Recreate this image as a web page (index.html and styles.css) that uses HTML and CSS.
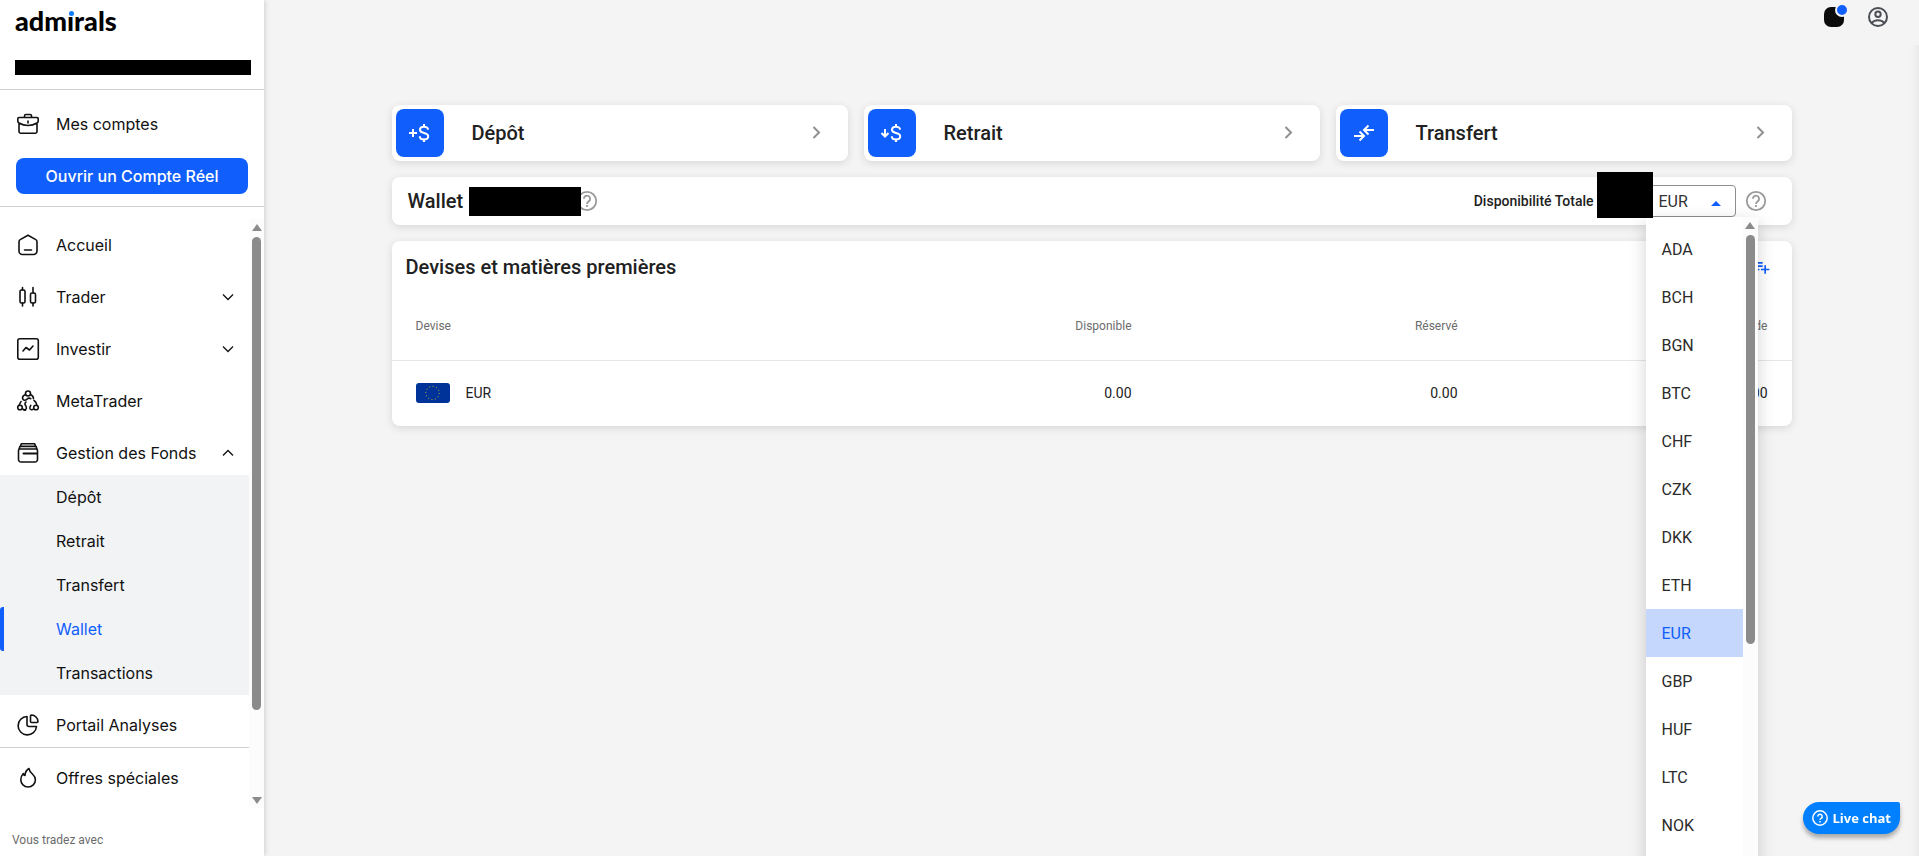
FILE: index.html
```html
<!DOCTYPE html>
<html lang="fr">
<head>
  <meta charset="UTF-8" />
  <meta name="viewport" content="width=device-width, initial-scale=1.0" />
  <title>Wallet</title>
  <link rel="stylesheet" href="styles.css">
</head>
<body>
  <!-- Sidebar -->
  <aside class="sidebar">
    <a class="logo" href="#">adm<span class="logo-i">ı</span>rals</a>
    <div class="user-redacted"></div>

    <div class="accounts">
      <a class="nav-link" href="#">
        <svg class="icon" viewBox="0 0 24 24"><path d="M3 5.500h18a1.200 1.200 0 0 1 1.200 1.200V9c0 1-.5 1.700-1.200 2v8.500a1.800 1.800 0 0 1-1.800 1.800H4.800A1.800 1.800 0 0 1 3 19.500V11c-.7-.3-1.200-1-1.200-2V6.700A1.200 1.200 0 0 1 3 5.500zM3 11c2.500 1.500 5.500 2.500 9 2.500s6.500-1 9-2.500M8.500 5.500V4A1.500 1.500 0 0 1 10 2.500h4A1.500 1.500 0 0 1 15.500 4v1.500M12 9v2" /></svg>
        Mes comptes
      </a>
      <button class="open-btn" type="button">Ouvrir un Compte Réel</button>
    </div>

    <div class="nav-wrap">
      <nav class="nav">
        <a class="nav-link" href="#">
          <svg class="icon" viewBox="0 0 24 24"><path d="M12 2.300 4.200 6.600A2.500 2.500 0 0 0 3 8.700V18a3.500 3.500 0 0 0 3.500 3.500h11A3.500 3.500 0 0 0 21 18V8.700a2.500 2.500 0 0 0-1.200-2.100zM8.500 17h7" /></svg>
          Accueil
        </a>
        <a class="nav-link" href="#">
          <svg class="icon" viewBox="0 0 24 24"><rect x="4" y="5" width="5" height="13" rx="1.500" /><rect x="14.500" y="8" width="5" height="10" rx="1.500" /><path d="M6.500 2.500v2.500M6.500 18v3M17 2.500v5.500M17 18v3" /></svg>
          Trader
          <svg class="chevron" viewBox="0 0 16 16"><path d="M3 5.500l5 5 5-5" /></svg>
        </a>
        <a class="nav-link" href="#">
          <svg class="icon" viewBox="0 0 24 24"><rect x="1.800" y="1.800" width="20.500" height="20.500" rx="2" /><path d="M7 14l3-3.500 3.500 2.500L17 9" /></svg>
          Investir
          <svg class="chevron" viewBox="0 0 16 16"><path d="M3 5.500l5 5 5-5" /></svg>
        </a>
        <a class="nav-link" href="#">
          <svg class="icon" viewBox="0 0 24 24"><circle cx="12" cy="4.500" r="2.500" /><circle cx="4" cy="18.500" r="2.300" /><circle cx="20" cy="18.500" r="2.300" /><path d="M9.500 5.500C7.500 6.300 6.300 8 6.600 9.500c.4 2 2.700 2.200 4.200.8 1.200-1.200 2.500-1.500 4-.6M14.500 5.500c1.800.8 3 2.500 3 4.300M5 12.500 3.200 16M18 11.500c1.500.8 2.500 2.500 2.800 4.500M6.500 19.700c.8 1.500 3 1.500 3.800 0 .7-1.500-.3-2.500-1-3.700-.6-1-.3-2.500.7-3M17.500 20c-1 1-2.800 1-3.600-.4-.5-1.200.2-2.200.9-3.200M8 21.300h1.500" /></svg>
          MetaTrader
        </a>
        <a class="nav-link" href="#">
          <svg class="icon" viewBox="0 0 24 24"><path d="M2.500 9.500A1.500 1.500 0 0 1 4 8h16a1.500 1.500 0 0 1 1.500 1.500v9a2.500 2.500 0 0 1-2.500 2.500H5a2.500 2.500 0 0 1-2.500-2.500zM3 8l1-2.600h16L21 8M4.500 5l.8-2.200h13.400l.8 2.200" /><path class="bold" d="M7.500 12.500H21" /></svg>
          Gestion des Fonds
          <svg class="chevron" viewBox="0 0 16 16"><path d="M3 10.500l5-5 5 5" /></svg>
        </a>
        <ul class="submenu">
          <li><a href="#">Dépôt</a></li>
          <li><a href="#">Retrait</a></li>
          <li><a href="#">Transfert</a></li>
          <li><a class="active" href="#">Wallet</a></li>
          <li><a href="#">Transactions</a></li>
        </ul>
        <a class="nav-link" href="#">
          <svg class="icon" viewBox="0 0 24 24"><path d="M11 3.500A9.200 9.200 0 1 0 20.500 13.500H13a2 2 0 0 1-2-2z" /><path d="M14.500 3a1 1 0 0 1 1-1A6.800 6.800 0 0 1 22 8.500a1 1 0 0 1-1 1h-5.500a1 1 0 0 1-1-1z" /></svg>
          Portail Analyses
        </a>
        <hr class="nav-line">
        <a class="nav-link" href="#">
          <svg class="icon" viewBox="0 0 24 24"><path d="M13 2.500c-3 2-4 4.500-4 7-1-.3-1.500-1-1.700-2C5.500 9.500 4.800 11.500 4.800 13.700a7.300 7.300 0 0 0 14.600 0c0-2.700-1.400-4.200-3-5.700C14.500 6.300 13.300 5 13 2.500z" /></svg>
          Offres spéciales
        </a>
      </nav>
      <div class="scrollbar nav-scrollbar">
        <span class="arrow-up"></span>
        <span class="thumb"></span>
        <span class="arrow-down"></span>
      </div>
    </div>

    <p class="trade-with">Vous tradez avec</p>
  </aside>

  <div class="page">
    <!-- Top bar -->
    <header class="topbar">
      <button class="notif" type="button" aria-label="Notifications"><span class="dot"></span></button>
      <button class="account" type="button" aria-label="Profil">
        <svg viewBox="0 0 24 24"><circle cx="12" cy="12" r="9" /><circle cx="12" cy="9.300" r="2.700" /><path d="M5.500 18c1.700-1.800 3.900-2.800 6.500-2.800s4.800 1 6.500 2.800" /></svg>
      </button>
    </header>

    <main class="content">
      <div class="container">
        <!-- Actions -->
        <div class="actions">
          <a class="card action" href="#">
            <span class="action-icon">
              <svg viewBox="0 0 24 24"><path d="M1 12h8M5 8v8M20 8.700c0-1.900-1.600-3-4-3s-4 1.100-4 3c0 2 1.500 2.700 4 3.300s4.200 1.300 4.200 3.300-1.700 3.200-4.200 3.200-4.200-1.200-4.200-3.200M16 3v2.500M16 18.500V21" /></svg>
            </span>
            <span class="action-title">Dépôt</span>
            <svg class="next" viewBox="0 0 24 24"><path d="M9.500 6l5.500 5.500L9.500 17" /></svg>
          </a>
          <a class="card action" href="#">
            <span class="action-icon">
              <svg viewBox="0 0 24 24"><path d="M5 8v7M1.500 12 5 15.500 8.500 12M20 8.700c0-1.900-1.600-3-4-3s-4 1.100-4 3c0 2 1.500 2.700 4 3.300s4.200 1.300 4.200 3.300-1.700 3.200-4.200 3.200-4.200-1.200-4.200-3.200M16 3v2.500M16 18.500V21" /></svg>
            </span>
            <span class="action-title">Retrait</span>
            <svg class="next" viewBox="0 0 24 24"><path d="M9.500 6l5.500 5.500L9.500 17" /></svg>
          </a>
          <a class="card action" href="#">
            <span class="action-icon">
              <svg viewBox="0 0 24 24"><path d="M2 15h9M7.500 10.500 12 15l-4.500 4.500M22 9h-9M16.500 4.500 12 9l4.500 4.500" /></svg>
            </span>
            <span class="action-title">Transfert</span>
            <svg class="next" viewBox="0 0 24 24"><path d="M9.500 6l5.500 5.500L9.500 17" /></svg>
          </a>
        </div>

        <!-- Wallet -->
        <section class="card wallet">
          <h1>Wallet</h1>
          <span class="wallet-redacted"></span>
          <svg class="help wallet-help" viewBox="0 0 24 24"><circle cx="12" cy="12" r="9.200" /><path d="M8.900 9.800a3.100 3.100 0 1 1 4.900 2.500c-1 .8-1.800 1.300-1.800 2.700M12 16v2" /></svg>
          <label class="total" for="currency">Disponibilité Totale</label>
          <span class="total-redacted"></span>
          <div class="select">
            <select id="currency">
              <option>EUR</option>
            </select>
            <svg class="caret" viewBox="0 0 24 24"><path d="M7 14l5-5 5 5z" /></svg>
            <div class="menu">
              <ul class="options">
                <li><button type="button">ADA</button></li>
                <li><button type="button">BCH</button></li>
                <li><button type="button">BGN</button></li>
                <li><button type="button">BTC</button></li>
                <li><button type="button">CHF</button></li>
                <li><button type="button">CZK</button></li>
                <li><button type="button">DKK</button></li>
                <li><button type="button">ETH</button></li>
                <li><button type="button" class="selected">EUR</button></li>
                <li><button type="button">GBP</button></li>
                <li><button type="button">HUF</button></li>
                <li><button type="button">LTC</button></li>
                <li><button type="button">NOK</button></li>
              </ul>
              <div class="scrollbar menu-scrollbar">
                <span class="arrow-up"></span>
                <span class="thumb"></span>
              </div>
            </div>
          </div>
          <svg class="help" viewBox="0 0 24 24"><circle cx="12" cy="12" r="9.200" /><path d="M8.900 9.800a3.100 3.100 0 1 1 4.900 2.500c-1 .8-1.800 1.300-1.800 2.700M12 16v2" /></svg>
        </section>

        <!-- Currencies -->
        <section class="card currencies">
          <div class="currencies-head">
            <h2>Devises et matières premières</h2>
            <button class="add" type="button" aria-label="Ajouter">
              <svg viewBox="0 0 24 24"><path d="M14 10H2v2h12v-2zm0-4H2v2h12V6zm4 8v-4h-2v4h-4v2h4v4h2v-4h4v-2h-4zM2 16h8v-2H2v2z" /></svg>
            </button>
          </div>
          <table>
            <thead>
              <tr><th>Devise</th><th>Disponible</th><th>Réservé</th><th>Solde</th></tr>
            </thead>
            <tbody>
              <tr>
                <td>
                  <div class="currency">
                    <svg class="flag" viewBox="0 0 34 20"><rect width="34" height="20" rx="3" /><circle cx="16.500" cy="10" r="6.700" /></svg>
                    EUR
                  </div>
                </td>
                <td>0.00</td>
                <td>0.00</td>
                <td>0.00</td>
              </tr>
            </tbody>
          </table>
        </section>
      </div>
    </main>
  </div>

  <button class="chat" type="button">
    <svg viewBox="0 0 16 16"><circle cx="8" cy="8" r="7.200" /><path d="M5.800 6.400a2.200 2.200 0 1 1 3.300 1.900C8.300 8.700 8 9 8 9.800M8 11v1.500" /></svg>
    Live chat
  </button>
</body>
</html>
```

FILE: styles.css
```css
* {
  box-sizing: border-box;
}

body {
  margin: 0;
  height: 100vh;
  display: flex;
  overflow: hidden;
  background-color: #f4f4f4;
  font-family: Roboto, Arial, sans-serif;
  color: #212121;
}

a {
  color: inherit;
  text-decoration: none;
}

button {
  border: none;
  padding: 0;
  background: none;
  font-family: inherit;
  color: inherit;
  cursor: pointer;
}

ul {
  list-style: none;
  margin: 0;
  padding: 0;
}

svg {
  flex: none;
  fill: none;
  stroke: currentColor;
}

/* Sidebar */
.sidebar {
  width: 264px;
  flex: none;
  display: flex;
  flex-direction: column;
  background-color: #fff;
  box-shadow: 0 0 6px rgba(0, 0, 0, 0.2);
  font-family: Inter, Arial, sans-serif;
  font-size: 16px;
  color: #111;
  z-index: 1;
}

.logo {
  padding: 6px 15px 0;
  font-family: Lato, sans-serif;
  font-weight: 900;
  font-size: 27px;
  line-height: 30px;
  color: #000;
}

.logo-i {
  position: relative;
}

.logo-i::after {
  content: "";
  position: absolute;
  left: 2px;
  top: 7px;
  width: 5px;
  height: 5px;
  border-radius: 50%;
  background-color: #0a7cff;
}

.user-redacted {
  height: 15px;
  margin: 24px 13px 14px 15px;
  background-color: #000;
}

.accounts {
  padding: 12px 0;
  border-top: 1px solid #cfcfd6;
  border-bottom: 1px solid #cfcfd6;
}

.open-btn {
  display: block;
  width: 232px;
  height: 36px;
  margin: 12px 16px 0;
  border-radius: 8px;
  background-color: #105efb;
  color: #fff;
  font-weight: 500;
  font-size: 16px;
}

.nav-link {
  display: flex;
  align-items: center;
  height: 44px;
  padding: 0 12px 0 16px;
}

.icon {
  width: 24px;
  height: 24px;
  margin-right: 16px;
  stroke-width: 1.6;
  stroke-linecap: round;
  stroke-linejoin: round;
}

.icon .bold {
  stroke-width: 2;
}

.chevron {
  width: 16px;
  height: 16px;
  margin-left: auto;
  margin-right: 1px;
  stroke-width: 1.3;
}

.nav-wrap {
  height: 601px;
  display: flex;
}

.nav {
  flex: 1;
  display: flex;
  flex-direction: column;
  gap: 8px;
  padding-top: 16px;
}

.submenu {
  margin-top: -8px;
  background-color: #f1f3f5;
}

.submenu a {
  display: block;
  height: 44px;
  line-height: 44px;
  padding-left: 56px;
}

.submenu .active {
  color: #105efb;
  padding-left: 52px;
  border-left: 4px solid #105efb;
  border-radius: 3px;
}

.nav-line {
  width: 100%;
  height: 1px;
  margin: -8px 0 0;
  border: none;
  background-color: #cfcfd6;
}

.trade-with {
  margin: 24px 12px 0;
  font-family: Roboto, sans-serif;
  font-size: 12px;
  line-height: 16px;
  color: #6c6c6c;
}

/* Scrollbars */
.scrollbar {
  width: 15px;
  flex: none;
  display: flex;
  flex-direction: column;
  align-items: center;
  background-color: #fcfcfc;
}

.nav-scrollbar {
  margin-top: 12px;
}

.arrow-up,
.arrow-down {
  border-left: 5px solid transparent;
  border-right: 5px solid transparent;
}

.arrow-up {
  margin: 5px 0 6px;
  border-bottom: 7px solid #8b8b8b;
}

.arrow-down {
  margin: auto 0 4px;
  border-top: 7px solid #8b8b8b;
}

.thumb {
  width: 9px;
  height: 473px;
  border-radius: 5px;
  background-color: #8b8b8b;
}

/* Page */
.page {
  flex: 1;
  display: flex;
  flex-direction: column;
}

.topbar {
  height: 45px;
  display: flex;
  justify-content: flex-end;
  align-items: flex-start;
  gap: 22px;
  padding: 5px 29px 0 0;
}

.notif {
  position: relative;
  width: 20px;
  height: 20px;
  margin-top: 2px;
  border-radius: 7px;
  background-color: #0b0b0b;
}

.dot {
  position: absolute;
  top: -4px;
  right: -5px;
  width: 14px;
  height: 14px;
  border: 2px solid #f4f4f4;
  border-radius: 50%;
  background-color: #105efb;
}

.account svg {
  display: block;
  width: 24px;
  height: 24px;
  stroke: #4b4f55;
  stroke-width: 2;
}

.content {
  flex: 1;
  padding: 60px 64px 0;
  box-shadow: inset -12px 0 10px -10px rgba(0, 0, 0, 0.06);
}

.container {
  max-width: 1400px;
  margin: 0 auto;
  display: flex;
  flex-direction: column;
  gap: 16px;
}

.card {
  border-radius: 8px;
  background-color: #fff;
  box-shadow: 0 2px 8px rgba(0, 0, 0, 0.12);
}

.actions {
  display: grid;
  grid-template-columns: repeat(3, 1fr);
  gap: 16px;
}

.action {
  display: flex;
  align-items: center;
  padding: 4px 20px 4px 4px;
}

.action-icon {
  width: 48px;
  height: 48px;
  display: flex;
  align-items: center;
  justify-content: center;
  border-radius: 8px;
  background-color: #105efb;
  color: #fff;
}

.action-icon svg {
  width: 24px;
  height: 24px;
  stroke-width: 2;
}

.action-title {
  flex: 1;
  margin-left: 28px;
  font-size: 20px;
  font-weight: 500;
}

.next {
  width: 24px;
  height: 24px;
  stroke: #8f8f8f;
  stroke-width: 2;
}

.wallet {
  height: 48px;
  display: flex;
  align-items: center;
  padding: 0 24px 0 16px;
}

h1,
h2 {
  margin: 0;
  font-size: 20px;
  font-weight: 500;
}

.wallet-redacted {
  width: 112px;
  height: 29px;
  margin-left: 6px;
  background-color: #000;
  z-index: 1;
}

.help {
  width: 24px;
  height: 24px;
  stroke: #9a9a9a;
  stroke-width: 1.8;
}

.wallet-help {
  margin-left: -6px;
}

.total {
  margin-left: auto;
  font-size: 14px;
  font-weight: 500;
}

.total-redacted {
  width: 56px;
  height: 46px;
  margin: -5px -7px 7px 3px;
  background-color: #000;
  z-index: 3;
}

.select {
  position: relative;
  margin-right: 8px;
  z-index: 2;
}

.select select {
  display: block;
  width: 90px;
  height: 32px;
  padding: 0 12px;
  appearance: none;
  border: 1px solid #8f8f8f;
  border-radius: 4px;
  background-color: #fff;
  font-family: inherit;
  font-size: 16px;
  color: #333;
}

.caret {
  position: absolute;
  top: 7px;
  right: 8px;
  width: 24px;
  height: 24px;
  fill: #105efb;
  stroke: none;
  pointer-events: none;
}

.menu {
  position: absolute;
  top: 100%;
  left: 0;
  width: 112px;
  display: flex;
  background-color: #fff;
  box-shadow: 0 5px 16px rgba(0, 0, 0, 0.18);
}

.options {
  flex: 1;
  padding: 8px 0 16px;
}

.options button {
  display: block;
  width: 100%;
  height: 48px;
  padding-left: 16px;
  text-align: left;
  font-size: 16px;
  color: #2b2b2b;
}

.options .selected {
  background-color: #c5d7fc;
  color: #105efb;
}

.menu-scrollbar .thumb {
  height: 409px;
}

.currencies-head {
  display: flex;
  align-items: center;
  justify-content: space-between;
  height: 52px;
  padding: 0 21px 0 14px;
}

.add svg {
  display: block;
  width: 20px;
  height: 20px;
  fill: #105efb;
  stroke: none;
}

table {
  width: 100%;
  table-layout: fixed;
  border-collapse: collapse;
  font-size: 14px;
}

th,
td {
  height: 67px;
  padding: 0 24px;
  text-align: right;
}

th {
  border-bottom: 1px solid #e6e6e6;
  font-size: 12px;
  font-weight: 400;
  color: #6c6c6c;
}

td {
  height: 66px;
}

th:first-child,
td:first-child {
  width: 32%;
  text-align: left;
}

th:nth-child(3) {
  width: 326px;
}

th:nth-child(4) {
  width: 310px;
}

.currency {
  display: flex;
  align-items: center;
  gap: 16px;
}

.flag {
  width: 34px;
  height: 20px;
  fill: #003399;
  stroke: none;
}

.flag circle {
  fill: none;
  stroke: #d9c12e;
  stroke-width: 1;
  stroke-dasharray: 1 2.5;
}

/* Live chat */
.chat {
  position: fixed;
  right: 19px;
  bottom: 22px;
  display: flex;
  align-items: center;
  gap: 5px;
  height: 32px;
  padding: 0 9px;
  border-radius: 16px 2px 16px 16px;
  background-color: #0080ff;
  box-shadow: 0 4px 4px rgba(0, 0, 0, 0.3);
  color: #fff;
  font-family: "Open Sans", sans-serif;
  font-size: 13px;
  font-weight: 700;
}

.chat svg {
  width: 16px;
  height: 16px;
  stroke-width: 1.5;
}
```
